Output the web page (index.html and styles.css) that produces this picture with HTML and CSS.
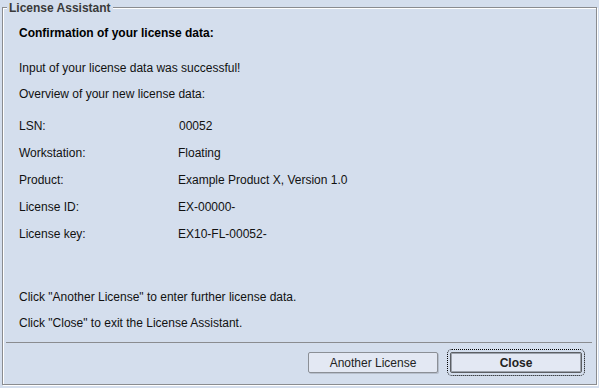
FILE: index.html
```html
<!DOCTYPE html>
<html lang="en">
<head>
    <meta charset="UTF-8">
    <title>License Assistant</title>
    <link rel="stylesheet" href="styles.css">
</head>
<body>
    <div class="panel">
        <span class="panel-title">License Assistant</span>

        <div class="content">
            <h2 class="heading">Confirmation of your license data:</h2>
            <p class="line success">Input of your license data was successful!</p>
            <p class="line overview">Overview of your new license data:</p>

            <div class="data-grid">
                <span>LSN:</span><span class="lsn">00052</span>
                <span>Workstation:</span><span>Floating</span>
                <span>Product:</span><span>Example Product X, Version 1.0</span>
                <span>License ID:</span><span>EX-00000-</span>
                <span>License key:</span><span>EX10-FL-00052-</span>
            </div>

            <p class="line hint-first">Click "Another License" to enter further license data.</p>
            <p class="line hint-second">Click "Close" to exit the License Assistant.</p>
        </div>

        <div class="separator"></div>

        <div class="button-row">
            <button class="btn">Another License</button>
            <button class="btn btn-default">Close</button>
        </div>
    </div>
</body>
</html>
```

FILE: styles.css
```css
html, body {
    height: 388px;
}
body {
    margin: 0;
    overflow: hidden;
    background-color: #d4deed;
    font-family: 'Liberation Sans', Arial, sans-serif;
    font-size: 12px;
    color: #111111;
}

.panel {
    position: relative;
    box-sizing: border-box;
    height: 378px;
    margin: 7px 2px 0 2px;
    border: 1px solid #8a8c90;
    box-shadow: 1px 1px 0 #ffffff, inset 1px 1px 0 #ffffff;
}
.panel-title {
    position: absolute;
    top: -7px;
    left: 4px;
    padding: 0 2px;
    line-height: 14px;
    font-weight: bold;
    color: #3a3a3a;
    background-color: #d4deed;
}

.content {
    padding: 18px 0 0 16px;
    line-height: 14px;
}
.heading {
    margin: 0;
    font-size: 12px;
    line-height: 14px;
    font-weight: bold;
    color: #000000;
}
.line {
    margin: 0;
}
.success {
    margin-top: 21px;
}
.overview {
    margin-top: 12px;
}

.data-grid {
    display: grid;
    grid-template-columns: 159px auto;
    row-gap: 13px;
    margin-top: 18px;
}
.lsn {
    padding-left: 1px;
}

.hint-first {
    margin-top: 49px;
}
.hint-second {
    margin-top: 12px;
}

.separator {
    height: 1px;
    margin: 12px 4px 0 3px;
    background-color: #8a8c90;
}

.button-row {
    display: flex;
    justify-content: flex-end;
    gap: 12px;
    padding: 9px 14px 0 0;
}
.btn {
    box-sizing: border-box;
    width: 130px;
    height: 21px;
    padding: 0;
    font-family: 'Liberation Sans', Arial, sans-serif;
    font-size: 12px;
    color: #222222;
    background-color: #e3e8f3;
    border: 1px solid #8b8f96;
    border-radius: 2px;
    box-shadow: 1px 1px 0 #b7bfcc;
}
.btn-default {
    width: 132px;
    font-weight: bold;
    border-color: #5c5f64;
    box-shadow: inset 0 0 0 1px #9da3ad;
    outline: 1px dotted #000000;
    outline-offset: 2px;
}
```
